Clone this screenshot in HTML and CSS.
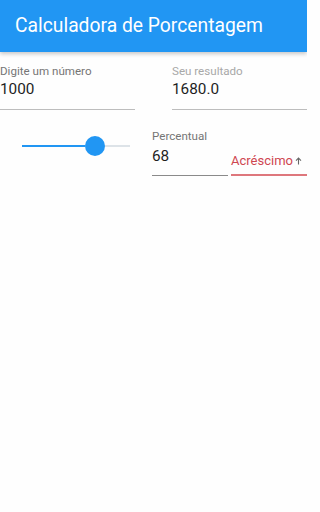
FILE: index.html
```html
<!DOCTYPE html>
<html lang="pt">
<head>
<meta charset="utf-8">
<title>Calculadora de Porcentagem</title>
<link rel="stylesheet" href="styles.css">
</head>
<body>
<header class="appbar">
  <h1 class="title">Calculadora de Porcentagem</h1>
</header>
<main class="content">
  <div class="row row-top">
    <div class="field field-number">
      <div class="label">Digite um número</div>
      <div class="value">1000</div>
    </div>
    <div class="field field-result">
      <div class="label label-disabled">Seu resultado</div>
      <div class="value">1680.0</div>
    </div>
  </div>
  <div class="row row-bottom">
    <div class="slider">
      <div class="track-active"></div>
      <div class="thumb"></div>
      <div class="track-inactive"></div>
    </div>
    <div class="field field-percent">
      <div class="label">Percentual</div>
      <div class="value value-percent">68</div>
    </div>
    <div class="dropdown">
      <span class="dropdown-text">Acréscimo</span>
      <svg class="dropdown-arrow" width="7" height="8" viewBox="0 0 7 8" aria-hidden="true">
        <path d="M3.5 7.5V1.2M1 3.6L3.5 1.1L6 3.6" fill="none" stroke="#666" stroke-width="1.1"/>
      </svg>
    </div>
  </div>
</main>
</body>
</html>
```

FILE: styles.css
```css
html, body {
  margin: 0;
  padding: 0;
  background: #fefefe;
}
body {
  width: 307px;
  height: 512px;
  font-family: Roboto, "Noto Sans", "Liberation Sans", sans-serif;
  overflow: hidden;
}
.appbar {
  height: 52px;
  background: #2196f3;
  box-shadow: 0 2px 4px rgba(0, 0, 0, 0.22);
  position: relative;
  z-index: 1;
}
.title {
  margin: 0;
  padding-left: 15px;
  font-size: 19.3px;
  font-weight: 400;
  line-height: 52px;
  color: #ffffff;
}
.content {
  display: flex;
  flex-direction: column;
}
.row {
  display: flex;
}
.row-top {
  justify-content: space-between;
  margin-top: 12px;
}
.row-bottom {
  margin-top: 19px;
  align-items: flex-start;
}
.field {
  display: flex;
  flex-direction: column;
  padding-bottom: 10px;
  border-bottom: 1px solid #bdbdbd;
}
.field-number,
.field-result {
  width: 135px;
}
.label {
  font-size: 11.6px;
  line-height: 14px;
  color: #757575;
}
.label-disabled {
  color: #a8a8a8;
}
.value {
  margin-top: 1px;
  font-size: 15.3px;
  line-height: 20px;
  color: #1e1e1e;
}
.value-percent {
  margin-top: 3px;
}
.slider {
  display: flex;
  align-items: center;
  height: 20px;
  margin: 7px 0 0 22px;
  width: 108px;
}
.track-active {
  width: 63px;
  height: 2px;
  background: #2196f3;
}
.thumb {
  width: 20px;
  height: 20px;
  border-radius: 50%;
  background: #2196f3;
  flex: none;
}
.track-inactive {
  flex: 1;
  height: 2px;
  background: #dde3e8;
}
.field-percent {
  width: 76px;
  margin-left: 22px;
  padding-bottom: 9px;
  border-bottom-color: #8a8a8a;
}
.dropdown {
  display: flex;
  align-items: baseline;
  gap: 2px;
  width: 76px;
  margin: 24px 0 0 3px;
  padding-bottom: 5px;
  border-bottom: 2px solid #de777c;
}
.dropdown-text {
  font-size: 13px;
  line-height: 16px;
  color: #cf4650;
}
.dropdown-arrow {
  flex: none;
}
```
